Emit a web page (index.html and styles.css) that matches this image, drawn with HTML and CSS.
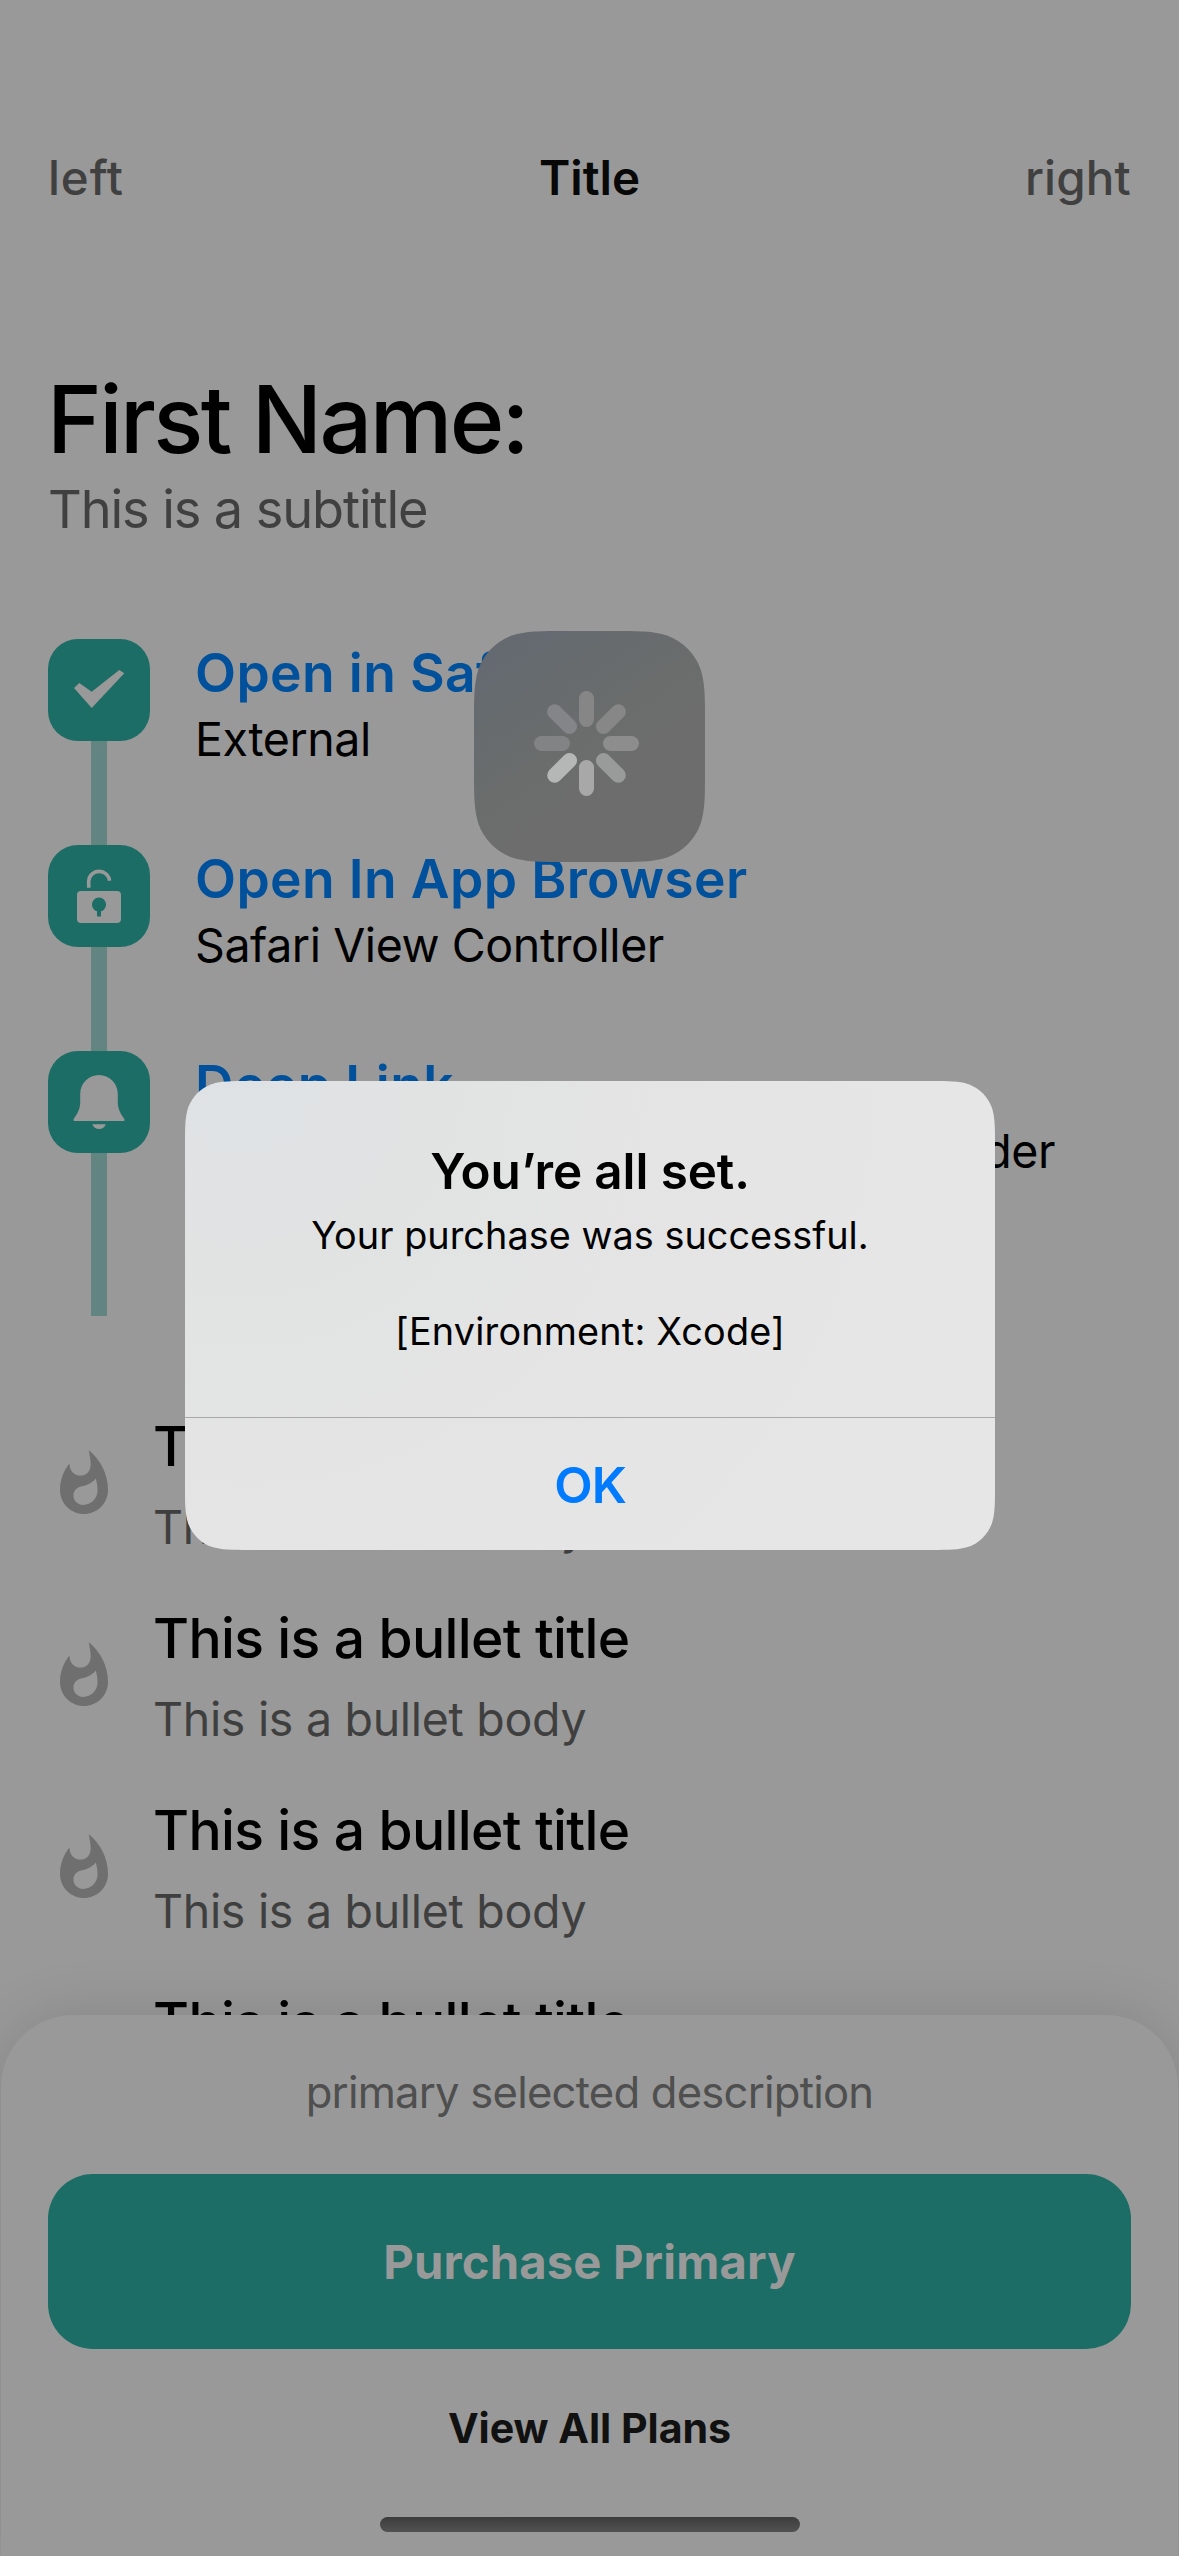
FILE: index.html
```html
<!DOCTYPE html>
<html lang="en">
<head>
<meta charset="utf-8">
<title>Paywall</title>
<link rel="stylesheet" href="styles.css">
</head>
<body>
<svg class="defs" aria-hidden="true">
  <symbol id="flame" viewBox="0 0 24 24">
    <path d="M13.5.67s.74 2.65.74 4.8c0 2.06-1.35 3.73-3.41 3.73-2.07 0-3.63-1.67-3.63-3.73l.03-.36C5.21 7.51 4 10.62 4 14c0 4.42 3.58 8 8 8s8-3.58 8-8C20 8.61 17.41 3.8 13.5.67zM11.71 19c-1.78 0-3.22-1.4-3.22-3.14 0-1.62 1.05-2.76 2.81-3.12 1.77-.36 3.6-1.21 4.62-2.58.39 1.29.59 2.65.59 4.04 0 2.65-2.15 4.8-4.8 4.8z"/>
  </symbol>
</svg>
<div class="screen">
  <header class="nav">
    <a class="nav__action nav__action--left">left</a>
    <div class="nav__title">Title</div>
    <a class="nav__action nav__action--right">right</a>
  </header>

  <main class="content">
    <h1 class="headline">First Name:</h1>
    <p class="subtitle">This is a subtitle</p>

    <section class="timeline">
      <div class="step">
        <div class="step__rail">
          <div class="step__tile">
            <svg class="step__icon" viewBox="0 0 102 102"><path d="M26 49 31.3 44 43.7 52.7 71.3 31 76.3 34.3 43.7 69z"/></svg>
          </div>
          <div class="step__line"></div>
        </div>
        <div class="step__text">
          <a class="step__title">Open in Safari</a>
          <p class="step__note">External</p>
        </div>
      </div>
      <div class="step">
        <div class="step__rail">
          <div class="step__tile">
            <svg class="step__icon" viewBox="0 0 102 102">
              <path class="step__stroke" d="M40.7 42.7V36a10.5 10.5 0 0 1 20.9-.3"/>
              <path fill-rule="evenodd" d="M33 46h36a4 4 0 0 1 4 4v24a4 4 0 0 1-4 4H33a4 4 0 0 1-4-4V50a4 4 0 0 1 4-4zm16 20.3v5.2h4v-5.2a7 7 0 1 0-4 0z"/>
            </svg>
          </div>
          <div class="step__line"></div>
        </div>
        <div class="step__text">
          <a class="step__title">Open In App Browser</a>
          <p class="step__note">Safari View Controller</p>
        </div>
      </div>
      <div class="step step--last">
        <div class="step__rail">
          <div class="step__tile">
            <svg class="step__icon" viewBox="0 0 102 102">
              <path d="M51 24c10.4 0 18.8 8.4 18.8 18.8V51c0 7.5 3 11.8 6.2 16.4 1.1 1.7.3 2.6-1 2.600H27c-1.300 0-2.100-.9-1-2.600C29.200 62.800 32.200 58.500 32.200 51V42.800C32.200 32.400 40.600 24 51 24z"/>
              <path d="M44.300 73.300h13.500c-1 3-3.600 4.700-6.750 4.700s-5.750-1.700-6.750-4.700z"/>
            </svg>
          </div>
          <div class="step__line"></div>
        </div>
        <div class="step__text">
          <a class="step__title">Deep Link</a>
          <p class="step__note step__note--wide">Opens the app from the trial reminder</p>
        </div>
      </div>
    </section>

    <ul class="bullets">
      <li class="bullet">
        <svg class="bullet__icon"><use href="#flame"/></svg>
        <div class="bullet__text">
          <h2 class="bullet__title">This is a bullet title</h2>
          <p class="bullet__body">This is a bullet body</p>
        </div>
      </li>
      <li class="bullet">
        <svg class="bullet__icon"><use href="#flame"/></svg>
        <div class="bullet__text">
          <h2 class="bullet__title">This is a bullet title</h2>
          <p class="bullet__body">This is a bullet body</p>
        </div>
      </li>
      <li class="bullet">
        <svg class="bullet__icon"><use href="#flame"/></svg>
        <div class="bullet__text">
          <h2 class="bullet__title">This is a bullet title</h2>
          <p class="bullet__body">This is a bullet body</p>
        </div>
      </li>
      <li class="bullet">
        <svg class="bullet__icon"><use href="#flame"/></svg>
        <div class="bullet__text">
          <h2 class="bullet__title">This is a bullet title</h2>
        </div>
      </li>
    </ul>
  </main>

  <footer class="sheet">
    <p class="sheet__description">primary selected description</p>
    <button class="sheet__buy">Purchase Primary</button>
    <a class="sheet__plans">View All Plans</a>
    <div class="home-indicator"></div>
  </footer>

  <div class="hud">
    <svg class="hud__spinner" viewBox="-52.5 -52.5 105 105">
      <rect x="-7.5" y="-52.5" width="15" height="36" rx="7.5" fill="#868686"/>
      <rect x="-7.5" y="-52.5" width="15" height="36" rx="7.5" fill="#878787" transform="rotate(45)"/>
      <rect x="-7.5" y="-52.5" width="15" height="36" rx="7.5" fill="#8d8d8d" transform="rotate(90)"/>
      <rect x="-7.5" y="-52.5" width="15" height="36" rx="7.5" fill="#999b9a" transform="rotate(135)"/>
      <rect x="-7.5" y="-52.5" width="15" height="36" rx="7.5" fill="#a8a8a8" transform="rotate(180)"/>
      <rect x="-7.5" y="-52.5" width="15" height="36" rx="7.5" fill="#b5b6b6" transform="rotate(225)"/>
      <rect x="-7.5" y="-52.5" width="15" height="36" rx="7.5" fill="#818385" transform="rotate(270)"/>
      <rect x="-7.5" y="-52.5" width="15" height="36" rx="7.5" fill="#838588" transform="rotate(315)"/>
    </svg>
  </div>

  <div class="alert" role="alertdialog">
    <div class="alert__body">
      <h2 class="alert__title">You’re all set.</h2>
      <p class="alert__message">Your purchase was successful.</p>
      <p class="alert__env">[Environment: Xcode]</p>
    </div>
    <button class="alert__ok">OK</button>
  </div>
</div>
</body>
</html>
```
FILE: styles.css
```css
* { box-sizing: border-box; margin: 0; padding: 0; }

:root {
  --page: #999;
  --teal: #1c6d66;
  --link: #00509b;
  --muted: #404040;
}

body {
  background: var(--page);
  color: #000;
  font-family: Inter, "Liberation Sans", sans-serif;
}

button { border: 0; background: none; font: inherit; }

.defs { display: block; width: 0; height: 0; }

.screen {
  position: relative;
  width: 1179px;
  height: 2556px;
  padding: 148px 48px 0;
  overflow: hidden;
  background: var(--page);
}

/* Navigation bar */
.nav {
  display: grid;
  grid-template-columns: 1fr auto 1fr;
  font-size: 47.5px;
  line-height: 60px;
  font-weight: 550;
}
.nav__action { color: var(--muted); letter-spacing: 0.2px; }
.nav__action--left { letter-spacing: 0.9px; }
.nav__action--right { text-align: right; }
.nav__title { font-weight: 600; letter-spacing: 0; color: #080808; }

.headline {
  margin: 155px 0 0 -1px;
  font-size: 93px;
  line-height: 112px;
  font-weight: 500;
  letter-spacing: -2.65px;
}
.subtitle {
  margin-top: 2px;
  font-size: 52.3px;
  line-height: 64px;
  letter-spacing: -1.1px;
  color: var(--muted);
}

/* Timeline */
.timeline { margin-top: 98px; }
.step { display: flex; gap: 45px; height: 206px; }
.step--last { height: 265px; }
.step__rail { display: flex; flex-direction: column; align-items: center; width: 102px; }
.step__tile { width: 102px; height: 102px; border-radius: 30px; background: var(--teal); }
.step__icon { display: block; width: 102px; height: 102px; fill: var(--page); }
.step__stroke { fill: none; stroke: var(--page); stroke-width: 3.6; }
.step__line { flex: 1; width: 16px; background: #628582; }
.step__text { padding-top: 2px; white-space: nowrap; }
.step__title {
  display: block;
  font-size: 53.4px;
  line-height: 64px;
  font-weight: 600;
  letter-spacing: 0.36px;
  color: var(--link);
}
.step__note {
  margin-top: 4px;
  font-size: 46.5px;
  line-height: 60px;
  letter-spacing: -0.42px;
}
.step__note--wide { width: 860px; text-align: right; }

/* Bullets */
.bullets {
  display: flex;
  flex-direction: column;
  gap: 47px;
  margin-top: 96px;
  list-style: none;
}
.bullet { display: flex; gap: 33px; height: 145px; align-items: flex-start; }
.bullet__icon { width: 72px; height: 72px; margin-top: 36px; fill: #6f6f6f; }
.bullet__title {
  font-size: 55.2px;
  line-height: 68px;
  font-weight: 500;
  letter-spacing: -0.65px;
}
.bullet__body {
  margin-top: 17px;
  font-size: 46.5px;
  line-height: 60px;
  letter-spacing: -0.3px;
  color: #3f3f3f;
}

/* Bottom sheet */
.sheet {
  position: absolute;
  left: 1px;
  right: 1px;
  top: 2015px;
  bottom: 0;
  display: flex;
  flex-direction: column;
  align-items: center;
  padding: 50px 47px 0;
  border-radius: 72px 72px 0 0;
  background: var(--page);
  box-shadow: 0 0 60px rgba(0, 0, 0, 0.13);
}
.sheet__description {
  font-size: 43.6px;
  line-height: 56px;
  letter-spacing: -0.78px;
  color: #4f4f4f;
}
.sheet__buy {
  align-self: stretch;
  height: 175px;
  margin-top: 53px;
  border-radius: 45px;
  background: var(--teal);
  color: var(--page);
  font-size: 47.2px;
  font-weight: 700;
  letter-spacing: 0.15px;
}
.sheet__plans {
  margin-top: 53px;
  font-size: 41.2px;
  line-height: 52px;
  font-weight: 650;
  letter-spacing: -0.05px;
  color: #111;
}
.home-indicator {
  width: 420px;
  height: 15px;
  margin-top: 63px;
  border-radius: 7.5px;
  background: linear-gradient(#3c3c3c, #525252);
}

/* Loading indicator */
.hud {
  position: absolute;
  left: 474px;
  top: 631px;
  display: flex;
  align-items: center;
  justify-content: center;
  width: 231px;
  height: 231px;
  padding: 0 6px 6px 0;
  background: linear-gradient(145deg, #646a70 12%, #6b6d6c 48%, #6d6d6d 65%);
  clip-path: path("M91.7 0H139.3C165.7 0 178.9 0 193.1 4.5C208.6 10.1 220.9 22.4 226.5 37.9C231 52.1 231 65.3 231 91.7V139.3C231 165.7 231 178.9 226.5 193.1C220.9 208.6 208.6 220.9 193.1 226.5C178.9 231 165.7 231 139.3 231H91.7C65.3 231 52.1 231 37.9 226.5C22.4 220.9 10.1 208.6 4.5 193.1C0 178.9 0 165.7 0 139.3V91.7C0 65.3 0 52.1 4.5 37.9C10.1 22.4 22.4 10.1 37.9 4.5C52.1 0 65.3 0 91.7 0Z");
}
.hud__spinner { width: 105px; height: 105px; }

/* Alert */
.alert {
  position: absolute;
  left: 185px;
  top: 1081px;
  width: 810px;
  height: 469px;
  text-align: center;
  background: radial-gradient(circle at 60px 0, #dfe2e5 0, #e1e3e3 180px, #e4e4e4 380px, #e6e6e6 700px);
  clip-path: path("M64.2 0H745.8C764.3 0 773.5 0 783.5 3.15C794.34 7.1 802.9 15.66 806.85 26.5C810 36.5 810 45.7 810 64.2V404.8C810 423.3 810 432.5 806.85 442.5C802.9 453.34 794.34 461.9 783.5 465.85C773.5 469 764.3 469 745.8 469H64.2C45.7 469 36.5 469 26.5 465.85C15.66 461.9 7.1 453.34 3.15 442.5C0 432.5 0 423.3 0 404.8V64.2C0 45.7 0 36.5 3.15 26.5C7.1 15.66 15.66 7.1 26.5 3.15C36.5 0 45.7 0 64.2 0Z");
}
.alert__body { height: 337px; padding-top: 60px; border-bottom: 1px solid #a9a9a9; }
.alert__title {
  font-size: 49.4px;
  line-height: 60px;
  font-weight: 600;
  letter-spacing: -0.09px;
}
.alert__message,
.alert__env { font-size: 37.8px; line-height: 48px; letter-spacing: 0.05px; }
.alert__message { margin-top: 10px; }
.alert__env { margin-top: 48px; letter-spacing: 0.2px; }
.alert__ok {
  width: 100%;
  height: 132px;
  padding-top: 2px;
  color: #007aff;
  font-size: 50px;
  font-weight: 600;
  letter-spacing: -1px;
}
```
